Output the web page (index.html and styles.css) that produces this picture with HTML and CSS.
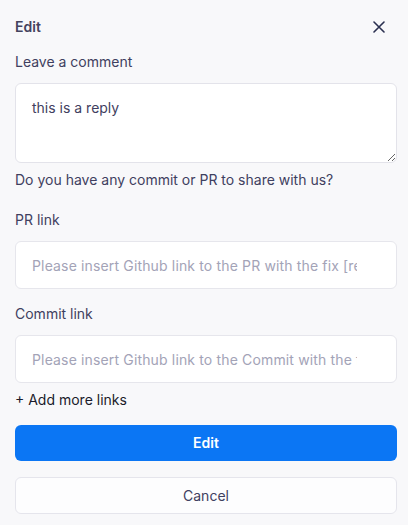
FILE: index.html
```html
<!DOCTYPE html>
<html>
<head>
<meta charset="utf-8">
<link rel="stylesheet" href="styles.css">
</head>
<body>
<div class="panel">
  <div class="header">
    <span class="title">Edit</span>
    <button class="close" aria-label="Close">
      <svg width="12" height="12" viewBox="0 0 12 12"><path d="M1 1L11 11M11 1L1 11" stroke="#2b3050" stroke-width="1.6" stroke-linecap="round"/></svg>
    </button>
  </div>
  <label class="label label-comment">Leave a comment</label>
  <textarea class="textarea">this is a reply</textarea>
  <p class="question">Do you have any commit or PR to share with us?</p>
  <label class="label label-pr">PR link</label>
  <input class="input" type="text" placeholder="Please insert Github link to the PR with the fix [required]">
  <label class="label label-commit">Commit link</label>
  <input class="input" type="text" placeholder="Please insert Github link to the Commit with the fix">
  <div class="add">+ Add more links</div>
  <button class="btn btn-primary">Edit</button>
  <button class="btn btn-secondary">Cancel</button>
</div>
</body>
</html>
```
FILE: styles.css
```css
* { box-sizing: border-box; }
html, body { margin: 0; padding: 0; background: #f8f8fa; }
body {
  font-family: Inter, "Noto Sans", sans-serif;
  font-size: 14px;
  line-height: 20px;
  color: #3f4060;
}
.panel {
  display: flex;
  flex-direction: column;
  padding: 17px 11px 0 15px;
}
.header {
  display: flex;
  justify-content: space-between;
  align-items: center;
  height: 20px;
}
.title { font-weight: 600; color: #44435e; }
.close {
  border: 0;
  background: none;
  padding: 0;
  width: 12px;
  height: 12px;
  margin-right: 12px;
  display: flex;
}
.label { display: block; color: #3f4060; }
.label-comment { margin-top: 15px; }
.label-pr { margin-top: 20px; }
.label-commit { margin-top: 15px; }
.textarea {
  margin-top: 11px;
  height: 80px;
  width: 100%;
  border: 1px solid #e3e3ea;
  border-radius: 6px;
  background: #fff;
  padding: 14px 16px;
  font: inherit;
  color: #3f4060;
  resize: vertical;
  outline: none;
}
.question { margin: 7px 0 0; }
.input {
  margin-top: 11px;
  height: 48px;
  width: 100%;
  border: 1px solid #e6e6ec;
  border-radius: 6px;
  background: #fff;
  padding: 0 39px 0 16px;
  font: inherit;
  letter-spacing: 0.15px;
  color: #3f4060;
  outline: none;
}
.input::placeholder { color: #a3a3b7; }
.add { margin-top: 7px; color: #1b1b2b; }
.btn {
  width: 100%;
  font: inherit;
  border-radius: 6px;
  cursor: pointer;
}
.btn-primary {
  margin-top: 15px;
  height: 36px;
  background: #0b76f4;
  color: #fff;
  border: 0;
  font-weight: 600;
}
.btn-secondary {
  margin-top: 16px;
  height: 37px;
  background: #fdfdfe;
  border: 1px solid #e5e5ec;
  color: #3f4060;
}
```
